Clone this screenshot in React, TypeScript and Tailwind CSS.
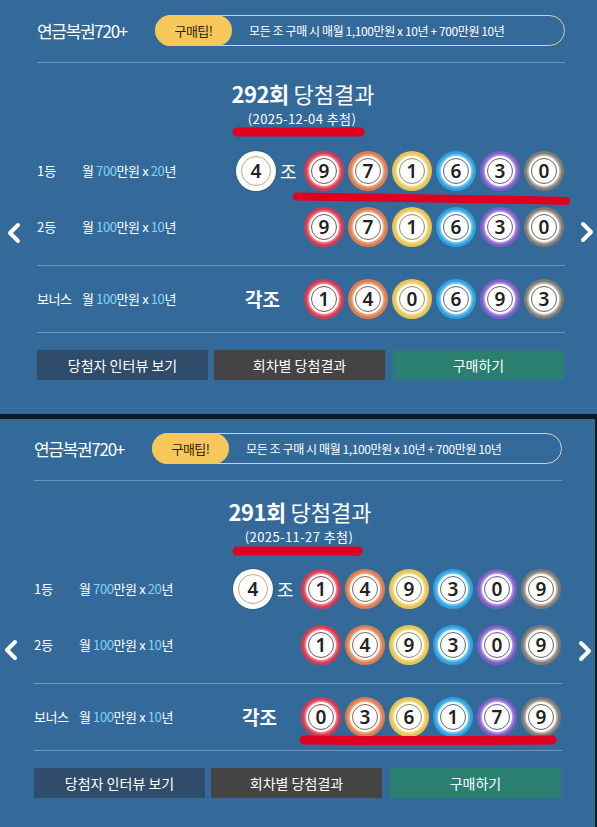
import React from "react";

const FONT = { fontFamily: '"Noto Sans CJK KR", "Noto Sans", sans-serif' };

type Tone = "red" | "orange" | "yellow" | "blue" | "purple" | "gray";
const TONES: Tone[] = ["red", "orange", "yellow", "blue", "purple", "gray"];

const OUTER: Record<Tone, string> = {
  red: "bg-[image:radial-gradient(closest-side,#f9b0ba_70%,#d9394f_90%)]",
  orange: "bg-[image:radial-gradient(closest-side,#f7c9a9_70%,#dc7d51_90%)]",
  yellow: "bg-[image:radial-gradient(closest-side,#faeeae_70%,#e8c452_90%)]",
  blue: "bg-[image:radial-gradient(closest-side,#b2e3fa_70%,#2ea2e2_90%)]",
  purple: "bg-[image:radial-gradient(closest-side,#d4c4f4_70%,#7d5ec7_90%)]",
  gray: "bg-[image:radial-gradient(closest-side,#ebe9e6_70%,#807a74_90%)]",
};
const LINE: Record<Tone, string> = {
  red: "border-[#8a4a52]",
  orange: "border-[#8a6252]",
  yellow: "border-[#9a8a5a]",
  blue: "border-[#4a6f86]",
  purple: "border-[#6a5a88]",
  gray: "border-[#666462]",
};

function Ball({ n, tone }: { n: number; tone: Tone }) {
  return (
    <div className={`w-10 h-10 rounded-full p-[5px] ${OUTER[tone]}`}>
      <div className="w-full h-full rounded-full bg-white p-[2px]">
        <div
          className={`w-full h-full rounded-full border ${LINE[tone]} flex items-center justify-center text-[19px] font-semibold text-[#222] leading-none`}
          style={{ fontFamily: '"Noto Sans", sans-serif' }}
        >
          {n}
        </div>
      </div>
    </div>
  );
}

function GroupBall({ n }: { n: number }) {
  return (
    <div className="w-10 h-10 rounded-full bg-white p-[5px] shadow-[0_0_2px_rgba(0,0,0,0.3)]">
      <div
        className="w-full h-full rounded-full border border-[#c9a47e] flex items-center justify-center text-[19px] font-semibold text-[#222] leading-none"
        style={{ fontFamily: '"Noto Sans", sans-serif' }}
      >
        {n}
      </div>
    </div>
  );
}

function Balls({ nums }: { nums: number[] }) {
  return (
    <div className="flex gap-[4px]">
      {nums.map((n, i) => (
        <Ball key={i} n={n} tone={TONES[i]} />
      ))}
    </div>
  );
}

function Prize({ a, b }: { a: string; b: string }) {
  return (
    <span className="tracking-[-0.4px]">
      월 <span className="text-[#7fd3f6]">{a}</span>만원 x <span className="text-[#7fd3f6]">{b}</span>년
    </span>
  );
}

function Chevron({ dir }: { dir: "l" | "r" }) {
  return (
    <svg width="14" height="22" viewBox="0 0 14 22">
      <polyline
        points={dir === "l" ? "11,3 3,11 11,19" : "3,3 11,11 3,19"}
        fill="none"
        stroke="white"
        strokeWidth="4"
        strokeLinecap="round"
        strokeLinejoin="round"
      />
    </svg>
  );
}

type PanelProps = {
  round: string;
  date: string;
  group: number;
  first: number[];
  bonus: number[];
  second: boolean;
};

function Panel({ round, date, group, first, bonus, second }: PanelProps) {
  return (
    <div
      className={`relative bg-[#346a99] text-white ${second ? "w-[595px] h-[408px] pl-[34px] pt-[14px]" : "w-[597px] h-[414px] pl-[37px] pt-[15px]"}`}
      style={FONT}
    >
      <div className="w-[528px]">
        {/* header */}
        <div className="h-[31px] flex items-center">
          <div className="w-[118px] text-[17px] tracking-[-1.3px]">연금복권720+</div>
          <div className="flex-1 h-[31px] rounded-full border border-[#d9d2b4] flex items-center">
            <div className="w-[77px] h-[31px] -my-px -ml-px rounded-full bg-[#f6c75b] text-[#2e2608] text-[13px] flex items-center justify-center tracking-[-0.5px]">
              구매팁!
            </div>
            <div className="pl-[17px] text-[12px] tracking-[-0.4px]">
              모든 조 구매 시 매월 1,100만원 x 10년 + 700만원 10년
            </div>
          </div>
        </div>
        <div className="mt-[16px] h-px bg-[#6a97c6]" />

        {/* title */}
        <div className="mt-[17px] h-[26px] leading-[26px] text-center text-[22px] pl-[4px]">
          <span className="font-bold tracking-[-0.5px]">{round}회</span> 당첨결과
        </div>
        <div className="mt-[5px] h-[16px] leading-[16px] text-center text-[13px] tracking-[0.4px] pl-[2px]">
          ({date} 추첨)
        </div>

        {/* 1등 */}
        <div className="mt-[24px] h-10 flex items-center text-[13px]">
          <div className="w-[45px]">1등</div>
          <div className="w-[154px]">
            <Prize a="700" b="20" />
          </div>
          <div className="w-[68px] flex items-center">
            <GroupBall n={group} />
            <span className="ml-[4px] text-[18px]">조</span>
          </div>
          <Balls nums={first} />
        </div>

        {/* 2등 */}
        <div className="mt-[16px] h-10 flex items-center text-[13px]">
          <div className="w-[45px]">2등</div>
          <div className="w-[154px]">
            <Prize a="100" b="10" />
          </div>
          <div className="w-[68px]" />
          <Balls nums={first} />
        </div>
        <div className="mt-[18px] h-px bg-[#6a97c6]" />

        {/* 보너스 */}
        <div className="mt-[13px] h-10 flex items-center text-[13px]">
          <div className="w-[45px] tracking-[-0.5px]">보너스</div>
          <div className="w-[154px]">
            <Prize a="100" b="10" />
          </div>
          <div className="w-[68px] pl-[9px] text-[19px] font-bold">각조</div>
          <Balls nums={bonus} />
        </div>
        <div className="mt-[13px] h-px bg-[#6a97c6]" />

        {/* buttons */}
        <div className="mt-[17px] flex text-[14px]">
          <div className="w-[171px] h-[30px] bg-[#2f4c6a] flex items-center justify-center">당첨자 인터뷰 보기</div>
          <div className="ml-[6px] w-[171px] h-[30px] bg-[#444444] flex items-center justify-center">회차별 당첨결과</div>
          <div className="ml-[8px] w-[171px] h-[30px] bg-[#2a7f71] flex items-center justify-center">구매하기</div>
        </div>
      </div>

      {!second && <div className="absolute left-0 right-0 top-[408px] h-px bg-[#3d77a8]" />}

      {/* carousel arrows */}
      <div className={`absolute ${second ? "left-[4px] top-[220px]" : "left-[7px] top-[222px]"}`}>
        <Chevron dir="l" />
      </div>
      <div className={`absolute ${second ? "left-[578px] top-[221px]" : "left-[580px] top-[221px]"}`}>
        <Chevron dir="r" />
      </div>

      {/* red marker annotations */}
      <svg className="absolute left-0 top-0 pointer-events-none" width="597" height="414" viewBox="0 0 597 414">
        {second ? (
          <>
            <path d="M237 132 L358 132" stroke="#e0001f" strokeWidth="9" strokeLinecap="round" fill="none" />
            <path d="M304 321 Q430 322 552 321" stroke="#e0001f" strokeWidth="9" strokeLinecap="round" fill="none" />
          </>
        ) : (
          <>
            <path d="M237 132 L360 132" stroke="#e0001f" strokeWidth="9" strokeLinecap="round" fill="none" />
            <path d="M297 196.5 Q430 198 566 201" stroke="#e0001f" strokeWidth="8" strokeLinecap="round" fill="none" />
          </>
        )}
      </svg>
    </div>
  );
}

export default function App() {
  return (
    <div className="w-[597px] h-[827px] bg-[#111820] overflow-hidden">
      <Panel round="292" date="2025-12-04" group={4} first={[9, 7, 1, 6, 3, 0]} bonus={[1, 4, 0, 6, 9, 3]} second={false} />
      <div className="h-[5px]" />
      <div className="flex">
        <Panel round="291" date="2025-11-27" group={4} first={[1, 4, 9, 3, 0, 9]} bonus={[0, 3, 6, 1, 7, 9]} second={true} />
      </div>
    </div>
  );
}
